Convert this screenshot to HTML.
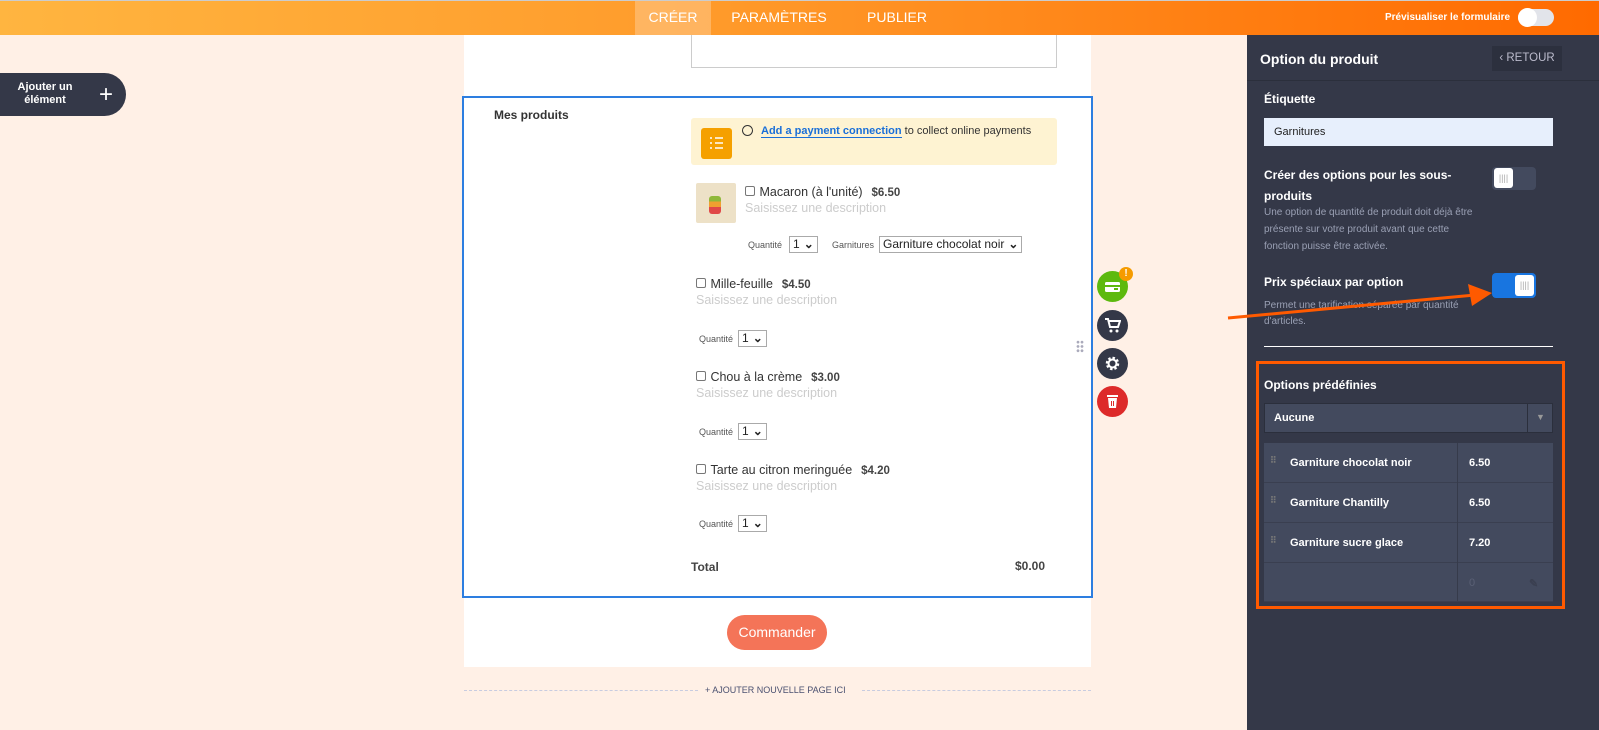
<!DOCTYPE html>
<html><head><meta charset="utf-8">
<style>
*{box-sizing:border-box;margin:0;padding:0}
body{width:1599px;height:730px;overflow:hidden;background:#fff0e6;font-family:"Liberation Sans",sans-serif;position:relative}
.abs{position:absolute}
.hdr{left:0;top:0;width:1599px;height:35px;background:linear-gradient(90deg,#ffb540 0%,#ff9a2a 45%,#ff6a00 100%);border-top:1px solid #ccc}
.tab{top:0;height:35px;color:#fff;font-size:14px;line-height:35px;text-align:center}
.panel{left:1247px;top:35px;width:352px;height:695px;background:#343848;color:#fff}
.form{left:464px;top:35px;width:627px;height:632px;background:#fff}
.sel{border:1px solid #aaa;height:17px;font-size:12px;line-height:15px;padding:0 3px;color:#222;background:#fff;display:inline-flex;align-items:center;gap:4px}
.cb{width:10px;height:10px;border:1px solid #777;border-radius:2px;display:inline-block}
.pname{font-size:12.5px;color:#333}
.price{font-size:11.5px;font-weight:bold;color:#444}
.desc{font-size:12.5px;color:#ccc}
.q{font-size:9px;color:#555}
.rb{width:31px;height:31px;border-radius:50%;left:1097px}
.row{left:1264px;width:289px;height:40px;background:#434a5e;border-bottom:1px solid #3a3f50}
.row span{position:absolute;font-size:11px;font-weight:bold;top:14px;color:#fff}
</style></head><body>
<div class="abs hdr"></div>
<div class="abs" style="left:635px;top:1px;width:76px;height:34px;background:rgba(255,255,255,.25)"></div>
<div class="abs tab" style="left:635px;width:76px">CRÉER</div>
<div class="abs tab" style="left:725px;width:108px">PARAMÈTRES</div>
<div class="abs tab" style="left:860px;width:74px">PUBLIER</div>
<div class="abs" style="left:1385px;top:12px;color:#fff;font-size:10px;font-weight:bold">Prévisualiser le formulaire</div>
<div class="abs" style="left:1518px;top:9px;width:36px;height:17px;border-radius:9px;background:#e2e4ea"></div>
<div class="abs" style="left:1518px;top:8px;width:19px;height:19px;border-radius:50%;background:#fff"></div>

<div class="abs" style="left:0;top:73px;width:126px;height:43px;background:#343848;border-radius:0 22px 22px 0"></div>
<div class="abs" style="left:14px;top:81px;width:62px;color:#fff;font-size:11px;font-weight:bold;text-align:center;line-height:13px">Ajouter un élément</div>
<div class="abs" style="left:99px;top:85px;color:#fff;font-size:24px;line-height:20px">+</div>

<div class="abs form"></div>
<div class="abs" style="left:691px;top:35px;width:366px;height:33px;border:1px solid #ccc;border-top:none"></div>
<div class="abs" style="left:462px;top:96px;width:631px;height:502px;border:2px solid #2d7ee0"></div>
<div class="abs" style="left:494px;top:108px;font-size:12px;color:#333;font-family:'Comic Sans MS','Liberation Sans',sans-serif;font-weight:bold">Mes produits</div>
<div class="abs" style="left:691px;top:118px;width:366px;height:47px;background:#fef3d2;border-radius:3px"></div>
<div class="abs" style="left:701px;top:128px;width:31px;height:31px;background:#f5a000;border-radius:3px"></div>
<svg class="abs" style="left:701px;top:128px" width="31" height="31"><g stroke="#fff" stroke-width="1.5"><line x1="14" y1="10" x2="22" y2="10"/><line x1="14" y1="15" x2="22" y2="15"/><line x1="14" y1="20" x2="22" y2="20"/><line x1="9" y1="10" x2="11" y2="10"/><line x1="9" y1="15" x2="11" y2="15"/><line x1="9" y1="20" x2="11" y2="20"/></g></svg>
<div class="abs" style="left:742px;top:125px;width:11px;height:11px;border:1.5px solid #333;border-radius:50%"></div>
<div class="abs" style="left:761px;top:125px;font-size:11px;color:#333"><span style="color:#1a6fd8;font-weight:bold;border-bottom:1px solid #1a6fd8">Add a payment connection</span> to collect online payments</div>

<div class="abs" style="left:696px;top:183px;width:40px;height:40px;background:#ede1c7;border-radius:2px"></div>
<div class="abs" style="left:709px;top:196px;width:12px;height:18px;background:linear-gradient(#8fb83a 0 30%,#f0a030 30% 60%,#e04848 60%);border-radius:3px"></div>
<div class="abs" style="left:745px;top:183px"><span class="cb"></span> <span class="pname">Macaron (à l'unité)</span> &nbsp;<span class="price">$6.50</span></div>
<div class="abs desc" style="left:745px;top:201px">Saisissez une description</div>
<div class="abs q" style="left:748px;top:240px">Quantité</div>
<div class="abs sel" style="left:789px;top:236px">1 <b>⌄</b></div>
<div class="abs q" style="left:832px;top:240px">Garnitures</div>
<div class="abs sel" style="left:879px;top:236px">Garniture chocolat noir <b>⌄</b></div>

<div class="abs" style="left:696px;top:275px"><span class="cb"></span> <span class="pname">Mille-feuille</span> &nbsp;<span class="price">$4.50</span></div>
<div class="abs desc" style="left:696px;top:293px">Saisissez une description</div>
<div class="abs q" style="left:699px;top:334px">Quantité</div>
<div class="abs sel" style="left:738px;top:330px">1 <b>⌄</b></div>

<div class="abs" style="left:696px;top:368px"><span class="cb"></span> <span class="pname">Chou à la crème</span> &nbsp;<span class="price">$3.00</span></div>
<div class="abs desc" style="left:696px;top:386px">Saisissez une description</div>
<div class="abs q" style="left:699px;top:427px">Quantité</div>
<div class="abs sel" style="left:738px;top:423px">1 <b>⌄</b></div>

<div class="abs" style="left:696px;top:461px"><span class="cb"></span> <span class="pname">Tarte au citron meringuée</span> &nbsp;<span class="price">$4.20</span></div>
<div class="abs desc" style="left:696px;top:479px">Saisissez une description</div>
<div class="abs q" style="left:699px;top:519px">Quantité</div>
<div class="abs sel" style="left:738px;top:515px">1 <b>⌄</b></div>

<div class="abs" style="left:691px;top:560px;font-size:12px;font-weight:bold;color:#444">Total</div>
<div class="abs" style="left:1015px;top:559px;font-size:12px;font-weight:bold;color:#444">$0.00</div>

<div class="abs" style="left:1076px;top:340px;width:8px;height:13px;background:radial-gradient(circle,#aab 1.2px,transparent 1.6px) 0 0/4px 4.3px"></div>

<div class="abs rb" style="top:271px;background:#5db90e"></div>
<svg class="abs" style="left:1103px;top:279px" width="19" height="15"><rect x="2" y="3" width="15" height="10" rx="1.5" fill="#fff"/><rect x="2" y="6" width="15" height="2" fill="#5db90e"/><rect x="11" y="9" width="4" height="2" fill="#5db90e"/></svg>
<div class="abs" style="left:1119px;top:267px;width:14px;height:14px;border-radius:50%;background:#f59b00;color:#fff;font-size:10px;font-weight:bold;text-align:center;line-height:14px">!</div>
<div class="abs rb" style="top:310px;background:#343848"></div>
<svg class="abs" style="left:1104px;top:317px" width="17" height="17"><path d="M1 2h3l2 8h8l2-6H5" stroke="#fff" stroke-width="2" fill="none"/><circle cx="7" cy="14" r="1.5" fill="#fff"/><circle cx="13" cy="14" r="1.5" fill="#fff"/></svg>
<div class="abs rb" style="top:348px;background:#343848"></div>
<svg class="abs" style="left:1104px;top:355px" width="17" height="17"><circle cx="8.5" cy="8.5" r="5" fill="none" stroke="#fff" stroke-width="3.5" stroke-dasharray="2.2 1.7"/><circle cx="8.5" cy="8.5" r="4" fill="none" stroke="#fff" stroke-width="2"/></svg>
<div class="abs rb" style="top:386px;background:#dd2a2a"></div>
<svg class="abs" style="left:1105px;top:393px" width="15" height="17"><rect x="2" y="2" width="11" height="2" fill="#fff"/><path d="M3 5h9l-1 10H4z" fill="#fff"/><rect x="6" y="8" width="1" height="5" fill="#dd2a2a"/><rect x="8" y="8" width="1" height="5" fill="#dd2a2a"/></svg>

<div class="abs" style="left:727px;top:615px;width:100px;height:35px;border-radius:18px;background:#f47458;color:#fff;font-family:'Comic Sans MS','Liberation Sans',sans-serif;font-size:14px;text-align:center;line-height:35px">Commander</div>
<div class="abs" style="left:464px;top:690px;width:234px;border-top:1px dashed #c8cce0"></div>
<div class="abs" style="left:862px;top:690px;width:229px;border-top:1px dashed #c8cce0"></div>
<div class="abs" style="left:705px;top:685px;font-size:9px;color:#4a5070">+ AJOUTER NOUVELLE PAGE ICI</div>

<div class="abs panel"></div>
<div class="abs" style="left:1260px;top:51px;color:#fff;font-size:14px;font-weight:bold">Option du produit</div>
<div class="abs" style="left:1492px;top:46px;width:70px;height:25px;background:#2c303e;color:#bbc;font-size:11.5px;line-height:25px;text-align:center">‹ RETOUR</div>
<div class="abs" style="left:1247px;top:80px;width:352px;border-top:1px solid #2b2f3c"></div>
<div class="abs" style="left:1264px;top:92px;color:#fff;font-size:12px;font-weight:bold">Étiquette</div>
<div class="abs" style="left:1264px;top:118px;width:289px;height:28px;background:#e7effc;color:#222;font-size:11px;line-height:28px;padding-left:10px">Garnitures</div>
<div class="abs" style="left:1264px;top:165px;width:220px;color:#fff;font-size:12px;font-weight:bold;line-height:21px">Créer des options pour les sous-produits</div>
<div class="abs" style="left:1492px;top:167px;width:44px;height:23px;background:#434a5e;border-radius:4px"></div>
<div class="abs" style="left:1494px;top:168px;width:19px;height:20px;background:#fff;border-radius:3px;font-size:9px;color:#aaa;text-align:center;line-height:20px">||||</div>
<div class="abs" style="left:1264px;top:204px;width:215px;color:#9aa0b4;font-size:10px;line-height:17px">Une option de quantité de produit doit déjà être présente sur votre produit avant que cette fonction puisse être activée.</div>
<div class="abs" style="left:1264px;top:275px;color:#fff;font-size:12px;font-weight:bold">Prix spéciaux par option</div>
<div class="abs" style="left:1492px;top:273px;width:44px;height:25px;background:#1875e0;border-radius:4px"></div>
<div class="abs" style="left:1515px;top:275px;width:19px;height:21px;background:#fff;border-radius:3px;font-size:9px;color:#aaa;text-align:center;line-height:21px">||||</div>
<div class="abs" style="left:1264px;top:298px;width:220px;color:#9aa0b4;font-size:10px;line-height:16px">Permet une tarification séparée par quantité d'articles.</div>
<svg class="abs" style="left:1220px;top:280px" width="280" height="45"><line x1="8" y1="38" x2="255" y2="15" stroke="#ff5a00" stroke-width="3"/><path d="M272 13 L248 4 L252 26 Z" fill="#ff5a00"/></svg>
<div class="abs" style="left:1264px;top:346px;width:289px;border-top:1px solid #fff"></div>

<div class="abs" style="left:1256px;top:361px;width:309px;height:248px;border:3px solid #ff5a00"></div>
<div class="abs" style="left:1264px;top:378px;color:#fff;font-size:12px;font-weight:bold">Options prédéfinies</div>
<div class="abs" style="left:1264px;top:403px;width:289px;height:30px;background:#434a5e;border:1px solid #2b2f3c"></div>
<div class="abs" style="left:1274px;top:412px;color:#fff;font-size:11px;font-weight:bold">Aucune</div>
<div class="abs" style="left:1527px;top:404px;width:1px;height:28px;background:#2b2f3c"></div>
<div class="abs" style="left:1536px;top:412px;color:#999;font-size:9px">▼</div>
<div class="abs row" style="top:443px"><span style="left:6px;color:#777;font-size:9px;top:12px">⠿</span><span style="left:26px">Garniture chocolat noir</span><span style="left:205px">6.50</span></div>
<div class="abs row" style="top:483px"><span style="left:6px;color:#777;font-size:9px;top:12px">⠿</span><span style="left:26px">Garniture Chantilly</span><span style="left:205px">6.50</span></div>
<div class="abs row" style="top:523px"><span style="left:6px;color:#777;font-size:9px;top:12px">⠿</span><span style="left:26px">Garniture sucre glace</span><span style="left:205px">7.20</span></div>
<div class="abs row" style="top:563px;height:39px"><span style="left:205px;color:#5a6075;font-weight:normal">0</span><span style="left:265px;color:#3a3f50">✎</span></div>
<div class="abs" style="left:1457px;top:443px;width:1px;height:158px;background:#363b4b"></div>
</body></html>
